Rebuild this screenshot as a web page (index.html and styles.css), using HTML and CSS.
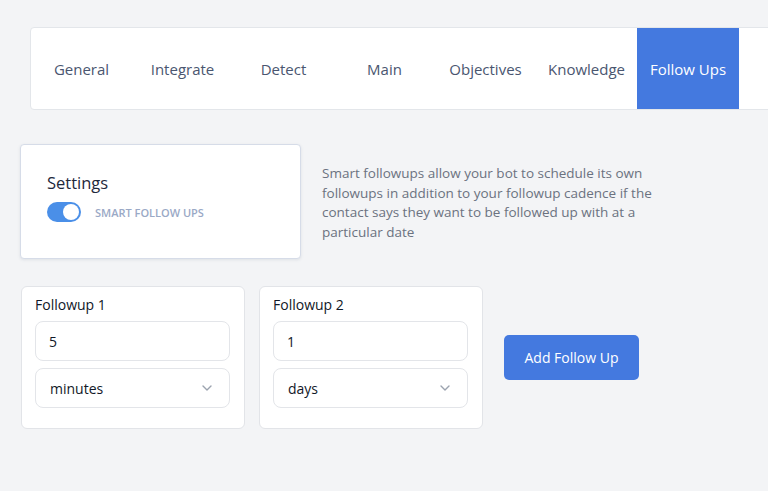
FILE: index.html
```html
<!DOCTYPE html>
<html>
<head>
<meta charset="utf-8">
<link rel="stylesheet" href="styles.css">
</head>
<body>
<div class="page">
  <nav class="tabs">
    <div class="tab">General</div>
    <div class="tab">Integrate</div>
    <div class="tab">Detect</div>
    <div class="tab">Main</div>
    <div class="tab">Objectives</div>
    <div class="tab">Knowledge</div>
    <div class="tab active">Follow Ups</div>
  </nav>

  <section class="settings-row">
    <div class="settings-card">
      <div class="settings-title">Settings</div>
      <div class="toggle-row">
        <span class="toggle"><span class="knob"></span></span>
        <span class="toggle-label">SMART FOLLOW UPS</span>
      </div>
    </div>
    <p class="desc">Smart followups allow your bot to schedule its own followups in addition to your followup cadence if the contact says they want to be followed up with at a particular date</p>
  </section>

  <section class="followups">
    <div class="fu-card">
      <div class="fu-label">Followup 1</div>
      <div class="field">5</div>
      <div class="field select">minutes
        <svg class="chev" width="10" height="6" viewBox="0 0 10 6"><path d="M1 1l4 4 4-4" fill="none" stroke="#9ca3af" stroke-width="1.4" stroke-linecap="round" stroke-linejoin="round"/></svg>
      </div>
    </div>
    <div class="fu-card">
      <div class="fu-label">Followup 2</div>
      <div class="field">1</div>
      <div class="field select">days
        <svg class="chev" width="10" height="6" viewBox="0 0 10 6"><path d="M1 1l4 4 4-4" fill="none" stroke="#9ca3af" stroke-width="1.4" stroke-linecap="round" stroke-linejoin="round"/></svg>
      </div>
    </div>
    <button class="add-btn">Add Follow Up</button>
  </section>
</div>
</body>
</html>
```

FILE: styles.css
```css
html, body {
  margin: 0;
  padding: 0;
  background: #f3f4f6;
  overflow: hidden;
  font-family: "Open Sans", "Noto Sans", sans-serif;
}
.page {
  width: 768px;
  height: 491px;
  overflow: hidden;
}
.tabs {
  display: flex;
  margin: 27px 0 0 30px;
  width: 800px;
  height: 81px;
  background: #fff;
  border: 1px solid #e3e6ea;
  border-radius: 4px;
}
.tab {
  width: 101px;
  flex: none;
  display: flex;
  align-items: center;
  justify-content: center;
  font-size: 15px;
  color: #4a5670;
}
.tab.active {
  width: 102px;
  background: #4479df;
  color: #fff;
}
.settings-row {
  display: flex;
  align-items: flex-start;
  margin: 34px 0 0 20px;
}
.settings-card {
  width: 281px;
  height: 115px;
  box-sizing: border-box;
  background: #fff;
  border: 1px solid #d6dce8;
  border-radius: 4px;
  box-shadow: 0 1px 3px rgba(100, 116, 139, 0.15);
  padding: 27px 0 0 26px;
}
.settings-title {
  font-size: 16.5px;
  color: #1e293b;
  line-height: 22px;
}
.toggle-row {
  display: flex;
  align-items: center;
  margin-top: 8px;
}
.toggle {
  width: 34px;
  height: 20px;
  border-radius: 10px;
  background: #4a8fe8;
  position: relative;
  flex: none;
}
.knob {
  position: absolute;
  right: 2px;
  top: 2px;
  width: 16px;
  height: 16px;
  border-radius: 50%;
  background: #fff;
}
.toggle-label {
  margin-left: 14px;
  font-size: 11px;
  font-weight: 600;
  color: #9aa9c6;
}
.desc {
  margin: 20px 0 0 21px;
  width: 345px;
  font-size: 13.5px;
  line-height: 19.5px;
  color: #6b7280;
}
.followups {
  display: flex;
  align-items: center;
  gap: 14px;
  margin: 27px 0 0 21px;
}
.fu-card {
  width: 224px;
  height: 143px;
  box-sizing: border-box;
  background: #fff;
  border: 1px solid #e2e4e8;
  border-radius: 6px;
  padding: 8px 14px 0 13px;
}
.fu-label {
  font-size: 14px;
  color: #111827;
  line-height: 20px;
  margin-bottom: 6px;
}
.field {
  height: 40px;
  box-sizing: border-box;
  border: 1px solid #e3e5e9;
  border-radius: 8px;
  padding: 0 13px;
  display: flex;
  align-items: center;
  font-size: 14px;
  color: #111827;
  margin-bottom: 7px;
}
.field.select {
  justify-content: space-between;
  padding-left: 14px;
  padding-right: 17px;
}
.add-btn {
  margin-left: 7px;
  width: 135px;
  height: 45px;
  border: none;
  border-radius: 5px;
  background: #4479df;
  color: #fff;
  font-family: "Open Sans", "Noto Sans", sans-serif;
  font-size: 14px;
}
```
